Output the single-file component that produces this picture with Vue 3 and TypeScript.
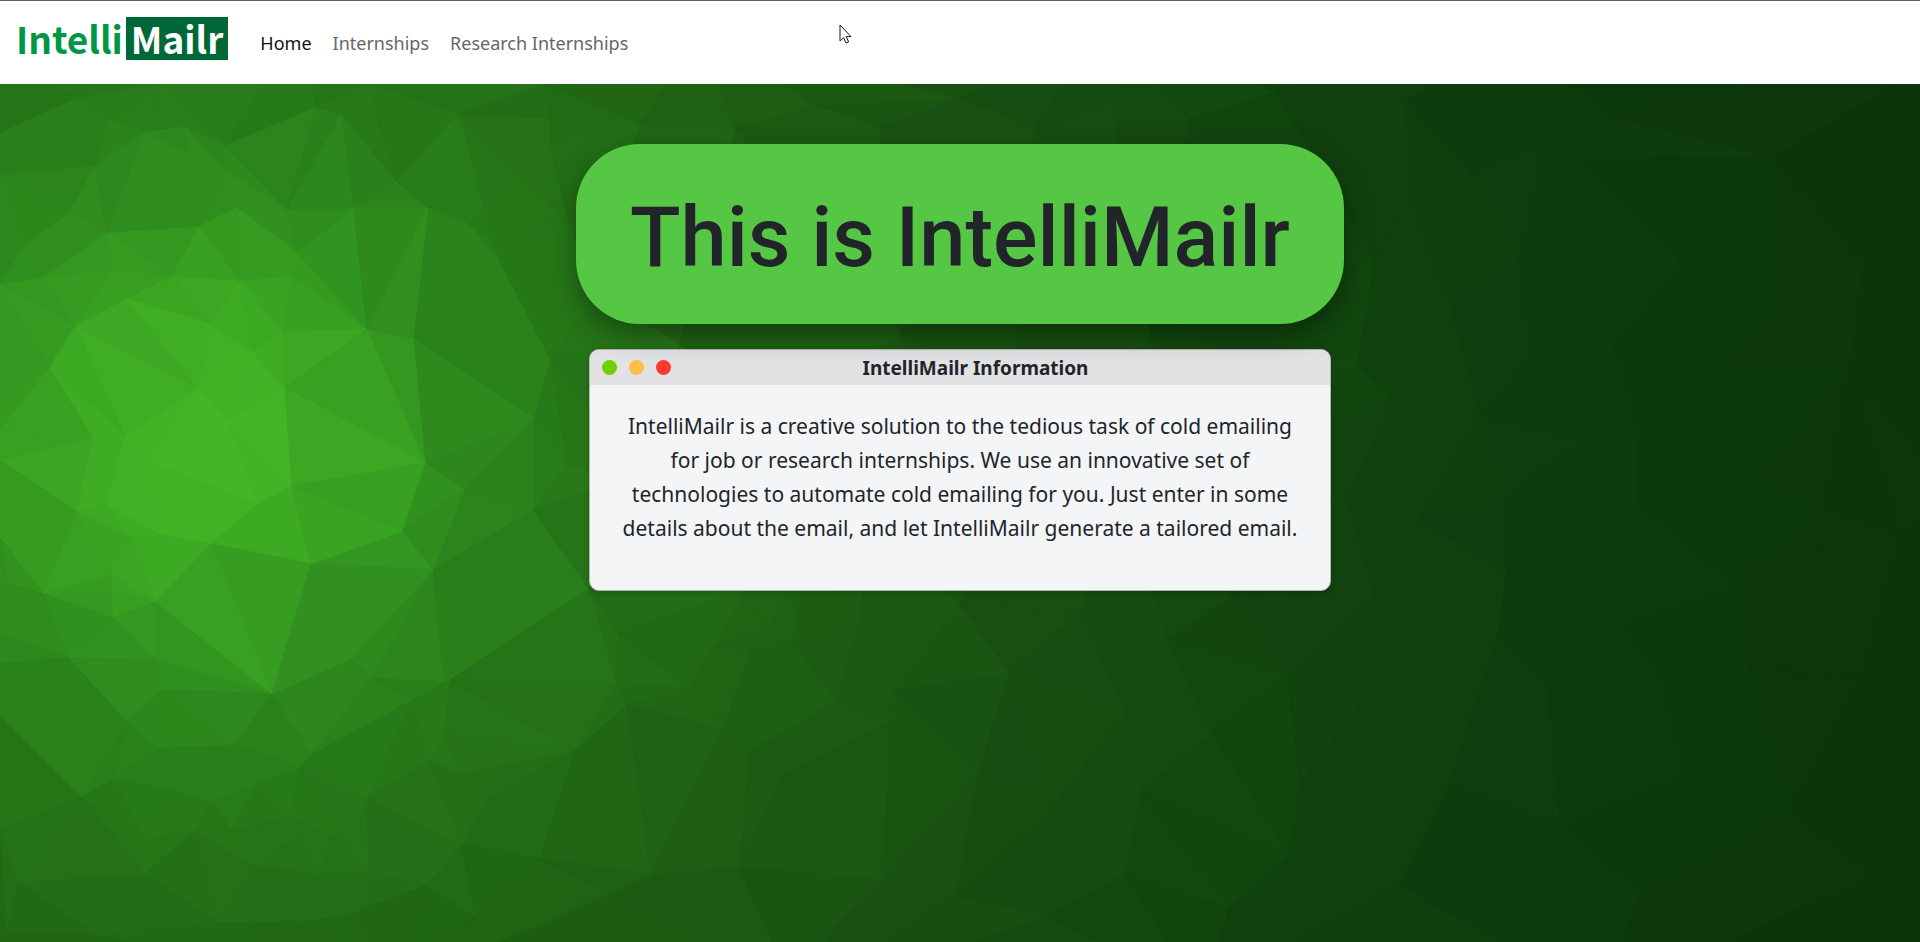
<script setup lang="ts">
type Point = [number, number]
interface Facet { points: string; fill: string }
interface Cell { a: number; b: number; c: number; x: number; y: number; r: number }

const links = [
  { label: 'Home', active: true },
  { label: 'Internships', active: false },
  { label: 'Research Internships', active: false },
]
const dots = ['go', 'hold', 'stop']

// Vertices of the faceted backdrop, in a 1920 x 858 drawing.
const vertices: Point[] = [
  [-40, -40], [300, -60], [700, -50], [1100, -60], [1500, -50], [1960, -40],
  [-50, 240], [-60, 640], [-40, 900], [380, 910], [800, 920], [1200, 910], [1600, 920], [1960, 900],
  [1970, 200], [1965, 430], [1970, 660],
  [77, 14], [0, 49], [109, 36], [163, 0], [95, 82], [143, 49], [185, 43], [225, 62], [225, 86], [0, 91],
  [70, 128], [107, 148], [199, 142], [237, 124], [287, 125], [23, 163], [45, 193], [0, 201], [114, 186],
  [172, 192], [240, 197], [298, 169], [292, 192], [76, 242], [127, 215], [50, 283], [0, 309], [198, 305],
  [210, 240], [252, 268], [283, 248], [125, 352], [93, 353], [77, 428], [285, 304], [273, 323], [227, 337],
  [150, 378], [292, 402], [258, 420], [0, 346], [0, 376], [107, 421],
  [317, 23], [342, 30], [354, 124], [368, 0], [396, 97], [428, 124], [459, 30], [550, 34], [550, 124],
  [485, 124], [468, 140], [489, 153], [500, 177], [367, 245], [413, 254], [551, 276], [534, 335], [425, 379],
  [465, 405], [567, 380], [534, 426], [568, 134], [515, 91], [546, 0], [550, 63], [596, 210],
  [0, 454], [43, 510], [112, 491], [113, 507], [132, 454], [160, 451], [211, 460], [156, 518], [113, 534],
  [156, 576], [68, 574], [0, 551], [0, 580], [127, 638], [162, 606], [272, 610], [311, 480], [402, 447],
  [433, 486], [350, 575], [372, 594], [82, 713], [0, 631], [114, 695], [157, 665], [235, 661], [300, 684],
  [312, 671], [213, 718], [258, 700], [289, 734], [145, 754], [193, 748], [231, 747], [145, 790], [18, 799],
  [0, 746], [255, 782], [218, 839], [96, 851], [300, 750], [335, 752], [367, 715], [413, 616], [444, 599],
  [429, 677], [369, 789], [317, 791], [316, 836], [427, 801], [444, 651], [360, 826], [162, 704], [7, 851],
  [172, 720], [8, 499],
  [450, 596], [589, 505], [618, 549], [617, 599], [627, 621], [689, 604], [715, 561], [746, 507], [575, 667],
  [464, 691], [462, 761], [489, 714], [540, 775], [475, 832], [651, 790], [610, 810], [724, 645], [750, 668],
  [750, 569], [767, 548], [793, 559], [806, 480], [861, 536], [836, 617], [782, 694], [740, 784], [884, 796],
  [893, 606], [890, 638], [833, 845],
  [640, 40], [690, 12], [735, 45], [818, 22], [880, 43], [960, 15], [1035, 44], [1112, 20], [1190, 35], [1275, 8],
  [680, 260], [780, 330], [640, 390], [900, 250], [870, 400], [1010, 320], [1150, 250], [1120, 410], [1260, 360],
  [960, 520], [1010, 590], [1080, 528], [1168, 556], [1125, 628], [1232, 512], [1288, 592], [978, 690],
  [1055, 720], [1142, 708], [1212, 650], [1300, 700], [956, 812], [1048, 832], [1125, 790], [1230, 824], [1290, 770],
  [1405, 19], [1542, 60], [1573, 72], [1606, 32], [1518, 180], [1680, 179], [1613, 261], [1410, 109], [1376, 176],
  [1652, 72], [1774, 74], [1862, 174], [1774, 225], [1849, 283], [1708, 289], [1636, 353], [1584, 358], [1530, 271],
  [1448, 216], [1480, 332], [1357, 280], [1393, 315], [1347, 415], [1420, 437], [1504, 416], [1507, 488], [1541, 384],
  [1675, 366], [1760, 394], [1826, 422], [1636, 419], [1375, 510], [1615, 540], [1497, 553], [1733, 502],
  [1798, 552], [1860, 597], [1749, 583], [1655, 585], [1549, 607], [1371, 606], [1900, 449], [1908, 24],
  [1450, 700], [1560, 740], [1680, 690], [1790, 730], [1870, 790], [1400, 800], [1640, 810], [1470, 90],
]

// Large slivers laid over the regular mesh around the light.
const slivers: Point[][] = [
  [[76, 242], [198, 305], [125, 352]],
  [[76, 242], [127, 215], [198, 305]],
  [[127, 215], [210, 240], [198, 305]],
  [[76, 242], [50, 283], [125, 352]],
  [[50, 283], [93, 353], [125, 352]],
  [[143, 49], [199, 142], [107, 148]],
  [[143, 49], [225, 86], [199, 142]],
  [[143, 49], [107, 148], [95, 82]],
  [[252, 268], [198, 305], [227, 337]],
  [[252, 268], [227, 337], [285, 304]],
  [[198, 305], [227, 337], [150, 378]],
  [[198, 305], [150, 378], [125, 352]],
  [[150, 378], [227, 337], [258, 420]],
  [[227, 337], [285, 304], [292, 402]],
  [[227, 337], [292, 402], [258, 420]],
  [[150, 378], [258, 420], [211, 460]],
  [[258, 420], [292, 402], [311, 480], [211, 460]],
  [[211, 460], [311, 480], [272, 610]],
  [[156, 518], [211, 460], [272, 610]],
  [[311, 480], [433, 486], [350, 575], [272, 610]],
  [[0, 631], [0, 580], [68, 574], [82, 713]],
  [[68, 574], [127, 638], [82, 713]],
  [[413, 254], [534, 335], [425, 379]],
  [[367, 245], [413, 254], [425, 379]],
  [[367, 245], [425, 379], [285, 304]],
  [[285, 304], [425, 379], [292, 402]],
  [[292, 402], [425, 379], [402, 447]],
  [[292, 402], [402, 447], [311, 480]],
  [[354, 124], [428, 124], [367, 245]],
  [[428, 124], [413, 254], [367, 245]],
]

// Distance from the light, then the colour there.
const glow: [number, number, number, number][] = [
  [0, 67, 181, 37], [70, 66, 179, 37], [130, 60, 168, 35], [180, 55, 158, 33], [230, 49, 145, 31],
  [290, 44, 134, 28], [360, 39, 122, 25], [450, 36, 112, 23], [540, 32, 102, 20], [680, 28, 91, 18],
  [850, 24, 80, 17], [1100, 17, 69, 14], [1300, 14, 62, 13], [1700, 11, 54, 11], [2200, 9, 46, 10],
]

function shade(x: number, y: number): string {
  const d = Math.hypot(x - 200, y - 355)
  let i = 1
  while (i < glow.length - 1 && glow[i][0] < d) i++
  const from = glow[i - 1]
  const to = glow[i]
  const t = Math.min(1, (d - from[0]) / (to[0] - from[0]))
  const wave = 1 + 0.012 * Math.sin(x * 12.9 + y * 78.2)
  const rgb = [1, 2, 3].map(k => Math.round((from[k] + (to[k] - from[k]) * t) * wave))
  return `rgb(${rgb.join(',')})`
}

function facet(corners: Point[]): Facet {
  const x = corners.reduce((sum, q) => sum + q[0], 0) / corners.length
  const y = corners.reduce((sum, q) => sum + q[1], 0) / corners.length
  return { points: corners.map(q => q.join(',')).join(' '), fill: shade(x, y) }
}

function cell(a: number, b: number, c: number, p: Point[]): Cell | null {
  const [ax, ay] = p[a]
  const [bx, by] = p[b]
  const [cx, cy] = p[c]
  const d = 2 * (ax * (by - cy) + bx * (cy - ay) + cx * (ay - by))
  if (Math.abs(d) < 0.001) return null
  const aa = ax * ax + ay * ay
  const bb = bx * bx + by * by
  const cc = cx * cx + cy * cy
  const x = (aa * (by - cy) + bb * (cy - ay) + cc * (ay - by)) / d
  const y = (aa * (cx - bx) + bb * (ax - cx) + cc * (bx - ax)) / d
  return { a, b, c, x, y, r: (ax - x) ** 2 + (ay - y) ** 2 }
}

// Delaunay triangulation, one vertex inserted at a time.
function triangulate(source: Point[]): Facet[] {
  const n = source.length
  const p: Point[] = [...source, [-9000, -7000], [11000, -7000], [900, 13000]]
  let cells: Cell[] = [cell(n, n + 1, n + 2, p) as Cell]
  for (let i = 0; i < n; i++) {
    const [x, y] = p[i]
    const rim = new Map<string, [number, number]>()
    const kept: Cell[] = []
    for (const t of cells) {
      if ((x - t.x) ** 2 + (y - t.y) ** 2 >= t.r) {
        kept.push(t)
        continue
      }
      for (const [u, v] of [[t.a, t.b], [t.b, t.c], [t.c, t.a]]) {
        const key = `${Math.min(u, v)}-${Math.max(u, v)}`
        if (rim.has(key)) rim.delete(key)
        else rim.set(key, [u, v])
      }
    }
    for (const [u, v] of rim.values()) {
      const made = cell(u, v, i, p)
      if (made) kept.push(made)
    }
    cells = kept
  }
  return cells
    .filter(t => t.a < n && t.b < n && t.c < n)
    .map(t => facet([p[t.a], p[t.b], p[t.c]]))
}

const facets = [...triangulate(vertices), ...slivers.map(facet)]
</script>

<template>
  <div class="page">
    <header class="navbar">
      <a class="brand" href="#"><span class="brand-first">Intelli</span><span class="brand-second">Mailr</span></a>
      <nav class="links" aria-label="Main">
        <a v-for="link in links" :key="link.label" href="#" class="link" :class="{ active: link.active }">{{ link.label }}</a>
      </nav>
      <svg class="pointer" viewBox="0 0 13 20" aria-hidden="true">
        <path d="M1 1V17L4.600 13.600L7 19L9.600 18L7.200 12.600H12Z" fill="#fff" stroke="#15151f" stroke-width="1" />
      </svg>
    </header>
    <main class="hero">
      <svg class="backdrop" viewBox="0 0 1920 858" preserveAspectRatio="xMidYMid slice" aria-hidden="true">
        <polygon v-for="(item, i) in facets" :key="i" :points="item.points" :fill="item.fill" :stroke="item.fill" />
      </svg>
      <div class="content">
        <h1 class="title">This is IntelliMailr</h1>
        <section class="window" aria-labelledby="window-title">
          <div class="window-bar">
            <div class="dots"><span v-for="dot in dots" :key="dot" class="dot" :class="dot"></span></div>
            <h2 id="window-title" class="window-title">IntelliMailr Information</h2>
          </div>
          <p class="window-text">IntelliMailr is a creative solution to the tedious task of cold emailing for job or research internships. We use an innovative set of technologies to automate cold emailing for you. Just enter in some details about the email, and let IntelliMailr generate a tailored email.</p>
        </section>
      </div>
    </main>
  </div>
</template>

<style>
body {
  margin: 0;
}
</style>

<style scoped>
.page {
  display: flex;
  flex-direction: column;
  min-height: 100vh;
  color: #212529;
  font-family: "Segoe UI", "Noto Sans", sans-serif;
}
.navbar {
  position: relative;
  display: flex;
  align-items: center;
  gap: 32px;
  box-sizing: border-box;
  min-height: 84px;
  padding: 0 16px 8px;
  border-top: 1px solid #5f5f66;
  background: #fff;
}
.brand {
  display: flex;
  align-items: center;
  gap: 3px;
  font: 700 37px/43px "Noto Sans CJK JP", sans-serif;
  text-decoration: none;
}
.brand-first {
  color: #009645;
}
.brand-second {
  padding: 0 5px;
  background: #006838;
  color: #fff;
}
.links {
  display: flex;
  gap: 21px;
  padding-top: 8px;
}
.link {
  color: #666;
  font-size: 18px;
  line-height: 30px;
  text-decoration: none;
}
.link.active {
  color: #111;
}
.pointer {
  position: absolute;
  top: 23px;
  left: 43.7%;
  width: 13px;
  height: 20px;
}
.hero {
  display: grid;
  flex: 1;
  overflow: hidden;
  background: #14500f;
}
.backdrop {
  grid-area: 1 / 1;
  width: 100%;
  height: 0;
  min-height: 100%;
}
.content {
  grid-area: 1 / 1;
  display: flex;
  flex-direction: column;
  align-items: center;
  gap: 25px;
  padding: 60px 16px;
}
.title {
  z-index: 1;
  box-sizing: border-box;
  width: 40%;
  min-width: min(768px, 100%);
  margin: 0;
  padding: 40px 16px 32px;
  border-radius: 64px;
  background: #56c645;
  box-shadow: 0 10px 28px rgba(0, 0, 0, 0.38);
  font: 500 83px/108px Roboto, sans-serif;
  text-align: center;
}
.window {
  box-sizing: border-box;
  width: 742px;
  max-width: 100%;
  overflow: hidden;
  border: 1px solid #b4b4b6;
  border-radius: 10px;
  background: #f4f5f7;
  box-shadow: 0 2px 6px rgba(0, 0, 0, 0.2);
}
.window-bar {
  display: flex;
  align-items: center;
  height: 35px;
  padding: 0 50px 0 12px;
  background: #e2e2e4;
}
.dots {
  display: flex;
  gap: 12px;
}
.dot {
  width: 15px;
  height: 15px;
  border-radius: 50%;
}
.go {
  background: #6fcf00;
}
.hold {
  background: #ffbd4a;
}
.stop {
  background: #ff3b30;
}
.window-title {
  flex: 1;
  margin: 0;
  font-size: 19px;
  line-height: 34px;
  text-align: center;
}
.window-text {
  margin: 0;
  padding: 24px 24px 45px;
  font-size: 21px;
  line-height: 34px;
  text-align: center;
}
</style>
